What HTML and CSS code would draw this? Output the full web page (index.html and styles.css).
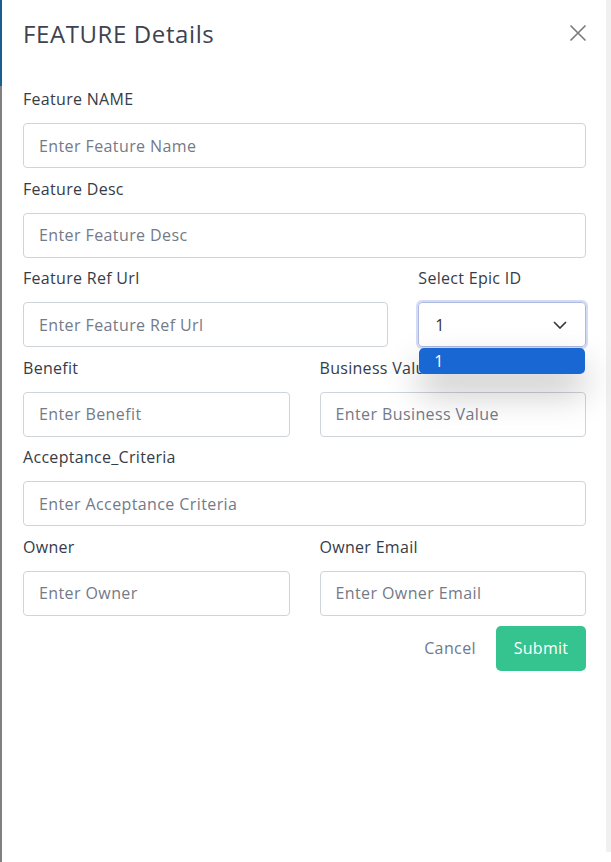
FILE: index.html
```html
<!DOCTYPE html>
<html lang="en">
<head>
  <meta charset="UTF-8" />
  <meta name="viewport" content="width=device-width, initial-scale=1.0"/>
  <title>Feature Details</title>
  <link rel="stylesheet" href="styles.css">
</head>
<body>

  <!-- edge of the page behind the modal -->
  <div class="page-edge"></div>

  <!-- Feature modal -->
  <section class="modal">
    <div class="modal-header">
      <h2>FEATURE Details</h2>
      <button class="close-btn" aria-label="Close">
        <svg width="18" height="18" viewBox="0 0 18 18">
          <path d="M1.5 1.5 L16.5 16.5 M16.5 1.5 L1.5 16.5" stroke="#7a7a7a" stroke-width="1.6" fill="none"/>
        </svg>
      </button>
    </div>

    <form class="form-grid">
      <div class="field span-12">
        <label for="featureName">Feature NAME</label>
        <input type="text" id="featureName" placeholder="Enter Feature Name">
      </div>
      <div class="field span-12">
        <label for="featureDesc">Feature Desc</label>
        <input type="text" id="featureDesc" placeholder="Enter Feature Desc">
      </div>
      <div class="field span-8">
        <label for="featureUrl">Feature Ref Url</label>
        <input type="text" id="featureUrl" placeholder="Enter Feature Ref Url">
      </div>
      <div class="field span-4 select-field">
        <label for="epicId">Select Epic ID</label>
        <div class="select-box" id="epicId">
          <span>1</span>
          <svg width="14" height="8" viewBox="0 0 14 8">
            <path d="M1 1 L7 7 L13 1" stroke="#333" stroke-width="1.6" fill="none"/>
          </svg>
        </div>
        <ul class="select-menu">
          <li class="active">1</li>
        </ul>
      </div>
      <div class="field span-6">
        <label for="benefit">Benefit</label>
        <input type="text" id="benefit" placeholder="Enter Benefit">
      </div>
      <div class="field span-6">
        <label for="businessValue">Business Value</label>
        <input type="text" id="businessValue" placeholder="Enter Business Value">
      </div>
      <div class="field span-12">
        <label for="criteria">Acceptance_Criteria</label>
        <input type="text" id="criteria" placeholder="Enter Acceptance Criteria">
      </div>
      <div class="field span-6">
        <label for="owner">Owner</label>
        <input type="text" id="owner" placeholder="Enter Owner">
      </div>
      <div class="field span-6">
        <label for="ownerEmail">Owner Email</label>
        <input type="text" id="ownerEmail" placeholder="Enter Owner Email">
      </div>
    </form>

    <div class="actions">
      <button class="cancel-btn">Cancel</button>
      <button class="submit-btn">Submit</button>
    </div>
  </section>

  <div class="scroll-track"></div>

</body>
</html>
```

FILE: styles.css
```css
body {
  margin: 0;
  height: 862px;
  display: flex;
  font-family: 'Open Sans', sans-serif;
  background-color: #fff;
  color: #3c4250;
  overflow: hidden;
}

.page-edge {
  width: 2px;
  background: linear-gradient(#17608f 0, #17608f 86px, #808080 86px);
}

.modal {
  flex: 1;
  padding: 0 20px 0 21px;
  background-color: #fff;
}

.scroll-track {
  width: 5px;
  margin-bottom: 10px;
  background-color: #f0f0f0;
}

.modal-header {
  height: 66px;
  display: flex;
  align-items: center;
  justify-content: space-between;
}

.modal-header h2 {
  margin: 0;
  font-size: 24px;
  font-weight: 500;
  color: #3d4350;
  letter-spacing: 0.6px;
}

.close-btn {
  background: none;
  border: none;
  padding: 0;
  margin-right: -1px;
  display: flex;
  cursor: pointer;
}

.form-grid {
  margin-top: 21px;
  display: grid;
  grid-template-columns: repeat(12, 1fr);
  column-gap: 30px;
  row-gap: 8.5px;
}

.span-12 { grid-column: span 12; }
.span-8 { grid-column: span 8; }
.span-6 { grid-column: span 6; }
.span-4 { grid-column: span 4; }

.field label {
  display: block;
  font-size: 16px;
  line-height: 24px;
  font-weight: 500;
  letter-spacing: 0.3px;
  color: #363c48;
  margin-bottom: 12px;
}

.field input {
  display: block;
  width: 100%;
  box-sizing: border-box;
  height: 45px;
  padding: 0 15px;
  font-family: inherit;
  font-size: 16px;
  letter-spacing: 0.4px;
  color: #333;
  border: 1px solid #cfd3da;
  border-radius: 4px;
  background-color: #fff;
}

.field input::placeholder {
  color: #737a89;
}

.select-field {
  position: relative;
}

.select-box {
  height: 45px;
  box-sizing: border-box;
  padding: 0 18px 0 16px;
  display: flex;
  align-items: center;
  justify-content: space-between;
  font-size: 16px;
  color: #333;
  border: 1px solid #aeb9e2;
  border-radius: 4px;
  box-shadow: 0 0 0 2px #d5dbf5;
}

.select-menu {
  position: absolute;
  left: 1px;
  right: 1px;
  top: 82px;
  margin: 0;
  padding: 0;
  list-style: none;
  border-radius: 5px;
  box-shadow: 0 18px 36px rgba(0, 0, 0, 0.26);
  z-index: 2;
}

.select-menu li {
  height: 26px;
  line-height: 26px;
  padding-left: 15px;
  font-size: 16px;
  color: #fff;
  background-color: #1967d2;
  border-radius: 5px;
}

.actions {
  margin-top: 10px;
  display: flex;
  justify-content: flex-end;
}

.cancel-btn {
  background: none;
  border: none;
  padding: 0 20px;
  font-family: inherit;
  font-size: 16px;
  letter-spacing: 0.4px;
  color: #6b7a90;
  cursor: pointer;
}

.submit-btn {
  width: 90px;
  height: 45px;
  border: none;
  border-radius: 5px;
  background-color: #35c38f;
  color: #fff;
  font-family: inherit;
  font-size: 16px;
  font-weight: 500;
  letter-spacing: 0.3px;
  cursor: pointer;
}
```
